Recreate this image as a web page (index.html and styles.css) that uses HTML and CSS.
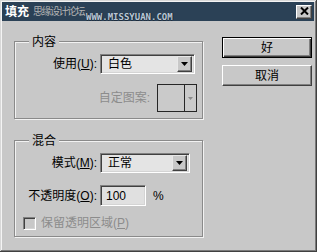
FILE: index.html
```html
<!DOCTYPE html>
<html lang="zh-CN">
<head>
<meta charset="utf-8">
<title>填充</title>
<link rel="stylesheet" href="styles.css">
</head>
<body>
<div class="win">
  <div class="title">
    <span class="title-text">填充</span>
    <span class="wm wm-cn">思缘设计论坛</span>
    <span class="wm wm-en">WWW.MISSYUAN.COM</span>
    <span class="close"><svg width="9" height="8" viewBox="0 0 9 8"><path d="M1 0.5 L8 7.5 M8 0.5 L1 7.5" stroke="#000" stroke-width="2" fill="none"/></svg></span>
  </div>
  <div class="body">
    <div class="left">
      <div class="group g1">
        <div class="legend">内容</div>
        <div class="row r-use">
          <span class="lbl">使用(<u>U</u>):</span>
          <div class="select s1"><span class="val">白色</span><span class="arrow"><svg width="7" height="4" viewBox="0 0 7 4"><path d="M0 0 H7 L3.5 4 Z" fill="#000"/></svg></span></div>
        </div>
        <div class="row r-pat">
          <span class="lbl lbl-pat dis">自定图案:</span>
          <div class="pattern"><span class="pat-swatch"></span><span class="pat-arrow"><svg width="5" height="3" viewBox="0 0 5 3"><path d="M0 0 H5 L2.5 3 Z" fill="#8a8a8a"/></svg></span></div>
        </div>
      </div>
      <div class="group g2">
        <div class="legend">混合</div>
        <div class="row r-mode">
          <span class="lbl">模式(<u>M</u>):</span>
          <div class="select s2"><span class="val">正常</span><span class="arrow"><svg width="7" height="4" viewBox="0 0 7 4"><path d="M0 0 H7 L3.5 4 Z" fill="#000"/></svg></span></div>
        </div>
        <div class="row r-op">
          <span class="lbl">不透明度(<u>O</u>):</span>
          <div class="input"><span class="val">100</span></div>
          <span class="pct">%</span>
        </div>
        <div class="row r-chk">
          <span class="chk"></span>
          <span class="dis chk-lbl">保留透明区域(<u>P</u>)</span>
        </div>
      </div>
    </div>
    <div class="right">
      <button class="btn btn-default">好</button>
      <button class="btn">取消</button>
    </div>
  </div>
</div>
</body>
</html>
```
FILE: styles.css
```css
html, body {
  margin: 0;
  padding: 0;
  background: #c8c8c8;
}
body {
  font-family: "Liberation Sans", "Noto Sans CJK SC", sans-serif;
  font-size: 12px;
  color: #000;
}
.win {
  width: 317px;
  height: 252px;
  box-sizing: border-box;
  padding: 2px 3px 3px 2px;
  background: #c8c8c8;
  box-shadow: inset -1px -1px 0 #404040, inset 1px 1px 0 #d8d8d8, inset -2px -2px 0 #7a7a7a, inset 2px 2px 0 #f4f4f4;
  overflow: hidden;
}
.title {
  position: relative;
  height: 19px;
  background: #2b4156;
  display: flex;
  align-items: center;
  justify-content: space-between;
  padding: 0 2px 0 3px;
}
.title-text {
  color: #fff;
  font-weight: bold;
  font-size: 12px;
  line-height: 14px;
}
.wm {
  position: absolute;
  pointer-events: none;
}
.wm-cn {
  left: 31px;
  top: 4px;
  font-size: 10px;
  letter-spacing: -1.5px;
  line-height: 12px;
  color: #b4b4b4;
}
.wm-en {
  left: 84px;
  top: 11px;
  font-family: "DejaVu Sans Mono", monospace;
  font-weight: bold;
  font-size: 9px;
  line-height: 9px;
  color: #b8c6d4;
  text-shadow: 1px 0 0 #1c2c3c, 0 1px 0 #1c2c3c;
}
.close {
  width: 16px;
  height: 14px;
  box-sizing: border-box;
  background: #c8c8c8;
  border: 1px solid;
  border-color: #fff #404040 #404040 #fff;
  box-shadow: inset -1px -1px 0 #808080;
  display: flex;
  align-items: center;
  justify-content: center;
  padding-bottom: 1px;
}
.body {
  display: flex;
}
.left {
  margin-left: 12px;
  padding-top: 20px;
  width: 189px;
}
.group {
  display: flex;
  flex-direction: column;
  border: 1px solid #8a8a8a;
  box-shadow: inset 1px 1px 0 #f2f2f2, 1px 1px 0 #f2f2f2;
}
.g1 {
  height: 78px;
  box-sizing: border-box;
}
.g2 {
  margin-top: 21px;
  height: 97px;
  box-sizing: border-box;
}
.legend {
  align-self: flex-start;
  margin: -7px 0 0 14px;
  padding: 0 3px;
  line-height: 14px;
  height: 14px;
  background: #c8c8c8;
}
.row {
  display: flex;
  align-items: center;
}
.lbl {
  width: 82px;
  margin-right: 3px;
  text-align: right;
  white-space: nowrap;
  line-height: 14px;
}
.dis {
  color: #8c8c8c;
}
.r-use { margin-top: 5px; }
.r-pat { margin-top: 10px; }
.lbl-pat {
  width: 135px;
  margin-right: 7px;
}
.select {
  box-sizing: border-box;
  height: 20px;
  border: 1px solid;
  border-color: #808080 #fff #fff #808080;
  box-shadow: inset 1px 1px 0 #404040, inset -1px -1px 0 #d4d4d4;
  background: #e4e4e4;
  display: flex;
  align-items: center;
  justify-content: space-between;
  padding: 2px;
}
.s1 { width: 95px; }
.s2 { width: 90px; }
.select .val {
  padding-left: 5px;
  line-height: 14px;
}
.arrow {
  width: 15px;
  height: 16px;
  box-sizing: border-box;
  background: #c8c8c8;
  border: 1px solid;
  border-color: #e8e8e8 #404040 #404040 #e8e8e8;
  box-shadow: inset -1px -1px 0 #808080;
  display: flex;
  align-items: center;
  justify-content: center;
}
.pattern {
  width: 40px;
  height: 28px;
  box-sizing: border-box;
  border: 1px solid #262626;
  display: flex;
  background: #cacaca;
}
.pat-swatch {
  width: 26px;
  border-right: 1px solid #262626;
}
.pat-arrow {
  flex: 1;
  display: flex;
  align-items: center;
  justify-content: center;
}
.r-mode { margin-top: 5px; }
.r-op { margin-top: 12px; }
.input {
  box-sizing: border-box;
  width: 46px;
  height: 21px;
  border: 1px solid;
  border-color: #808080 #fff #fff #808080;
  box-shadow: inset 1px 1px 0 #404040, inset -1px -1px 0 #d4d4d4;
  background: #e0e0e0;
  display: flex;
  align-items: center;
  padding-left: 5px;
}
.input .val { line-height: 14px; }
.pct {
  margin-left: 7px;
  line-height: 14px;
}
.r-chk {
  margin-top: 10px;
  height: 14px;
}
.chk {
  margin-left: 8px;
  width: 13px;
  height: 13px;
  box-sizing: border-box;
  border: 1px solid;
  border-color: #808080 #fff #fff #808080;
  box-shadow: inset 1px 1px 0 #404040, inset -1px -1px 0 #d4d4d4;
  background: #c8c8c8;
}
.chk-lbl {
  margin-left: 5px;
  line-height: 14px;
}
.right {
  margin-left: 19px;
  padding-top: 16px;
  width: 90px;
  display: flex;
  flex-direction: column;
  gap: 7px;
}
.btn {
  width: 90px;
  height: 21px;
  box-sizing: border-box;
  padding: 0;
  margin: 0;
  background: #c8c8c8;
  border: 1px solid;
  border-color: #fff #404040 #404040 #fff;
  box-shadow: inset -1px -1px 0 #808080;
  font-family: "Liberation Sans", "Noto Sans CJK SC", sans-serif;
  font-size: 12px;
  color: #000;
  line-height: 14px;
}
.btn-default {
  border-color: #000;
  box-shadow: inset 1px 1px 0 #fff, inset -1px -1px 0 #404040, inset -2px -2px 0 #808080;
}
```
